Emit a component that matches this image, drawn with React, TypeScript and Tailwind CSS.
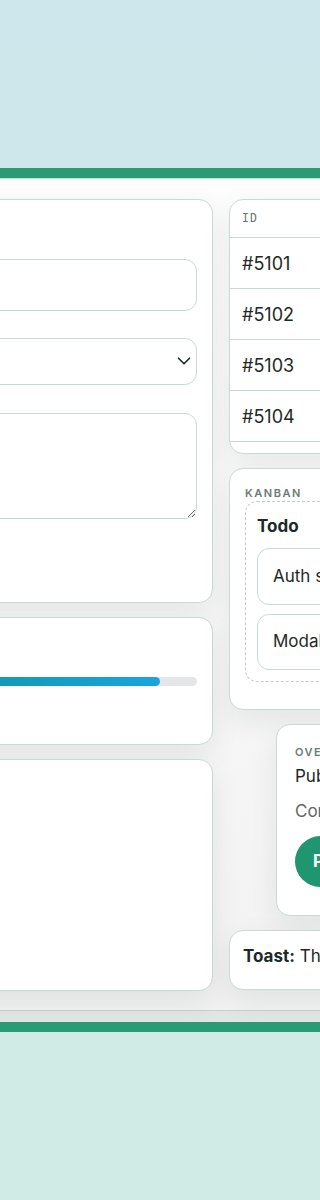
import { ChevronDown } from 'lucide-react'

const rows = ['#5101', '#5102', '#5103', '#5104', '#5105']

const card = 'bg-white border border-[#c9dad5] rounded-[14px] shadow-[0_10px_28px_rgba(20,40,35,0.08)]'

export default function App() {
  return (
    <div
      className="min-h-[1200px] w-full overflow-hidden bg-gradient-to-b from-[#cde7ec] to-[#d0ebe5] pt-[168px] text-[#1d2926]"
      style={{ fontFamily: 'Inter, "Noto Sans", sans-serif' }}
    >
      <section className="border-y-[10px] border-[#2a9b73] bg-[#dfe6e3] pb-[11px]">
        <div className="border-t border-[#bfe3d4] border-b border-b-[#c8cfcc] bg-gradient-to-b from-[#fdfdfd] to-[#f1f2f1] pt-[20px] pb-[19px]">
          <div className="flex gap-4 ml-[-187px]">
            {/* Left column */}
            <div className="w-[400px] shrink-0 flex flex-col gap-[14px]">
              <div className={`${card} px-[15px] pt-[59px] pb-[83px]`}>
                <input
                  className="block w-full h-[52px] rounded-[12px] border border-[#c9dad5] bg-white px-3 text-[17px] outline-none"
                  defaultValue=""
                />
                <div className="relative mt-[27px]">
                  <select className="block w-full h-[47px] appearance-none rounded-[12px] border border-[#c9dad5] bg-white px-3 text-[17px] outline-none">
                    <option></option>
                  </select>
                  <ChevronDown className="absolute right-[2px] top-[12px] w-[22px] h-[22px] text-[#1d2926]" strokeWidth={1.8} />
                </div>
                <textarea className="mt-[28px] block w-full h-[106px] rounded-[12px] border border-[#c9dad5] bg-white px-3 py-2 text-[17px] outline-none" />
              </div>

              <div className={`${card} px-[15px] pt-[59px] pb-[58px]`}>
                <div className="h-[9px] w-full rounded-full bg-[#e4e6e8] overflow-hidden">
                  <div className="h-full rounded-full bg-gradient-to-r from-[#138f8a] to-[#18a5e0]" style={{ width: '90%' }} />
                </div>
              </div>

              <div className={`${card} h-[232px]`} />
            </div>

            {/* Right column */}
            <div className="w-[300px] shrink-0 flex flex-col gap-[14px]">
              <div className={`${card} h-[255px] overflow-hidden`}>
                <div className="h-[38px] border-b border-[#c9dad5] px-3 flex items-center">
                  <span className="text-[11.5px] tracking-[0.1em] text-[#6b7672]" style={{ fontFamily: '"DejaVu Sans Mono", monospace' }}>
                    ID
                  </span>
                </div>
                {rows.map((r) => (
                  <div key={r} className="h-[51px] border-b border-[#c9dad5] px-3 flex items-center text-[18px]">
                    {r}
                  </div>
                ))}
              </div>

              <div className={`${card} px-[15px] pt-[16px] pb-[27px]`}>
                <div className="h-4 text-[11px] font-semibold tracking-[0.14em] leading-4 text-[#6e7a76]">KANBAN</div>
                <div className="rounded-[12px] border border-dashed border-[#c3cbc8] p-[11px] flex flex-col gap-[9px]">
                  <div className="h-[26px] leading-[26px] text-[17px] font-bold">Todo</div>
                  <div className="h-[57px] rounded-[12px] border border-[#c9dad5] bg-white px-[15px] flex items-center text-[17px] whitespace-nowrap">
                    Auth screen
                  </div>
                  <div className="h-[56px] rounded-[12px] border border-[#c9dad5] bg-white px-[15px] flex items-center text-[17px] whitespace-nowrap">
                    Modal polish
                  </div>
                </div>
              </div>

              <div className={`${card} ml-[47px] h-[192px] px-[18px] pt-[19px]`}>
                <div className="text-[11px] font-semibold tracking-[0.14em] leading-4 text-[#6e7a76]">OVERLAY</div>
                <div className="mt-[3px] text-[17px] leading-[26px] whitespace-nowrap">Publish changes?</div>
                <div className="mt-[9px] text-[17px] leading-[26px] text-[#5d6966] whitespace-nowrap">Confirm to continue</div>
                <button type="button" className="mt-[12px] h-[51px] rounded-full bg-[#1f9570] px-[18px] text-[17px] font-bold text-white">
                  Publish
                </button>
              </div>

              <div className={`${card} h-[60px] px-[13px] pt-[13px] text-[17px] leading-[24px] whitespace-nowrap`}>
                <span className="font-bold">Toast:</span> The changes were saved.
              </div>
            </div>
          </div>
        </div>
      </section>
    </div>
  )
}
